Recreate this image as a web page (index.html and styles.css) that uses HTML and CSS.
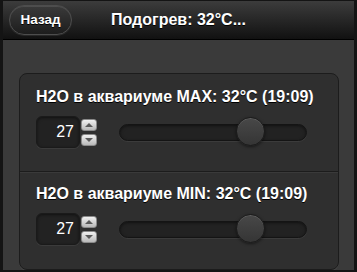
FILE: index.html
```html
<!DOCTYPE html>
<html lang="ru">
<head>
<meta charset="utf-8">
<title>Подогрев</title>
<link rel="stylesheet" href="styles.css">
</head>
<body>
<div class="frame">
  <header class="bar">
    <a class="back" href="#">Назад</a>
    <h1 class="title">Подогрев: 32°C...</h1>
    <span class="spacer"></span>
  </header>
  <main class="content">
    <div class="card">
      <div class="field">
        <label class="label">H2O в аквариуме MAX: 32°C (19:09)</label>
        <div class="controls">
          <div class="spin">
            <span class="num">27</span>
            <div class="arrows">
              <span class="arr up"></span>
              <span class="arr down"></span>
            </div>
          </div>
          <div class="track"><span class="knob" style="left:69.7%"></span></div>
        </div>
      </div>
      <div class="field divided">
        <label class="label">H2O в аквариуме MIN: 32°C (19:09)</label>
        <div class="controls">
          <div class="spin">
            <span class="num">27</span>
            <div class="arrows">
              <span class="arr up"></span>
              <span class="arr down"></span>
            </div>
          </div>
          <div class="track"><span class="knob" style="left:69.7%"></span></div>
        </div>
      </div>
    </div>
  </main>
</div>
</body>
</html>
```

FILE: styles.css
```css
html, body {
  margin: 0;
  padding: 0;
  background: #111;
}
body {
  font-family: "Liberation Sans", Arial, Helvetica, sans-serif;
  color: #fff;
}
.frame {
  width: 357px;
  height: 272px;
  box-sizing: border-box;
  border-style: solid;
  border-color: #141414;
  border-width: 1px 3px 2px 3px;
  background: #3a3a3a;
  display: flex;
  flex-direction: column;
  overflow: hidden;
}
.bar {
  height: 40px;
  box-sizing: border-box;
  border-bottom: 1px solid #000;
  background: linear-gradient(#3c3c3c, #111);
  display: grid;
  grid-template-columns: 1fr auto 1fr;
  align-items: center;
  padding: 0 6px;
}
.back {
  justify-self: start;
  width: 63px;
  height: 30px;
  box-sizing: border-box;
  border: 1px solid #4d4d4d;
  border-radius: 15px;
  background: linear-gradient(#3a3a3a, #1d1d1d);
  box-shadow: 0 1px 0 rgba(255,255,255,0.08), inset 0 1px 0 rgba(255,255,255,0.1);
  color: #fff;
  text-decoration: none;
  font-weight: bold;
  font-size: 13.5px;
  line-height: 28px;
  text-align: center;
  text-shadow: 0 1px 0 #000;
}
.title {
  margin: 0;
  font-size: 16px;
  font-weight: bold;
  line-height: 20px;
  text-shadow: 0 1px 0 #000;
  white-space: nowrap;
}
.content {
  flex: 1;
  padding: 33px 15px 0 16px;
}
.card {
  background: #2f2f2f;
  border: 1px solid #1c1c1c;
  border-radius: 8px;
  box-shadow: 0 1px 0 rgba(255,255,255,0.05);
}
.field {
  padding: 13px 16px 0 16px;
  height: 97px;
  box-sizing: border-box;
}
.divided {
  border-top: 1px solid #1c1c1c;
  box-shadow: inset 0 1px 0 #3a3a3a;
  height: 98px;
  padding-top: 12px;
}
.label {
  display: block;
  font-size: 16px;
  font-weight: bold;
  line-height: 20px;
  text-shadow: 0 1px 0 #000;
  white-space: nowrap;
}
.controls {
  display: flex;
  align-items: center;
  margin-top: 9px;
}
.spin {
  display: flex;
  align-items: center;
}
.num {
  width: 44px;
  height: 32px;
  box-sizing: border-box;
  background: #222;
  border: 1px solid #1a1a1a;
  border-radius: 6px;
  box-shadow: inset 0 1px 3px rgba(0,0,0,0.5), 0 1px 0 rgba(255,255,255,0.06);
  font-size: 16px;
  line-height: 30px;
  text-align: right;
  padding-right: 5px;
}
.arrows {
  display: flex;
  flex-direction: column;
  gap: 3px;
  margin-left: 1px;
}
.arr {
  width: 16px;
  height: 12px;
  box-sizing: border-box;
  border: 1px solid #8a8a8a;
  border-radius: 3px;
  background: linear-gradient(#f0f0f0, #b9b9b9);
  display: flex;
  align-items: center;
  justify-content: center;
}
.arr::before {
  content: "";
  width: 0;
  height: 0;
  border-left: 4px solid transparent;
  border-right: 4px solid transparent;
}
.up::before {
  border-bottom: 4px solid #5a5a5a;
}
.down::before {
  border-top: 4px solid #5a5a5a;
}
.track {
  flex: 1;
  position: relative;
  height: 17px;
  box-sizing: border-box;
  margin: 0 15px 0 22px;
  background: #222;
  border: 1px solid #141414;
  border-radius: 9px;
  box-shadow: inset 0 1px 3px rgba(0,0,0,0.5), 0 1px 0 rgba(255,255,255,0.06);
}
.knob {
  position: absolute;
  top: 50%;
  width: 29px;
  height: 29px;
  margin: -15px 0 0 -14px;
  box-sizing: border-box;
  border-radius: 50%;
  border: 1px solid #1a1a1a;
  background: linear-gradient(#484848, #353535);
  box-shadow: inset 0 1px 0 rgba(255,255,255,0.12), 0 1px 3px rgba(0,0,0,0.5);
}
```
